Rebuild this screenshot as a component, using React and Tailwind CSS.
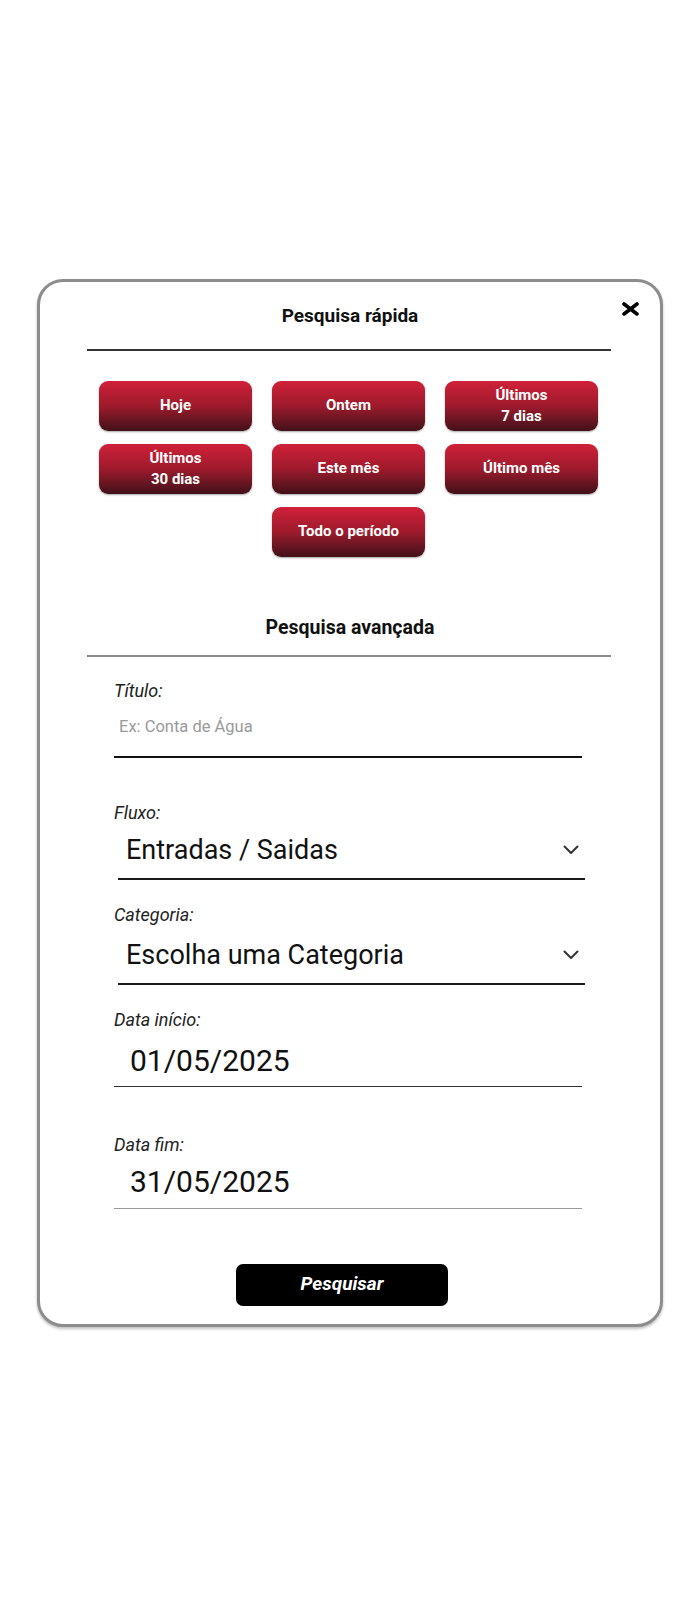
import React from "react";

const F = { fontFamily: "Roboto, 'Liberation Sans', sans-serif" };

function QuickButton({ children }) {
  return (
    <button
      className="h-[50px] w-[153px] rounded-[9px] bg-linear-to-b from-[#d02139] via-[#9e1a2c] to-[#43101a] text-white font-bold text-[15px] leading-[21px] shadow-[0_1px_2px_rgba(0,0,0,0.35)] flex flex-col items-center justify-center"
      style={F}
    >
      {children}
    </button>
  );
}

function Chevron() {
  return (
    <svg width="16" height="10" viewBox="0 0 16 10" fill="none">
      <path d="M1.5 1.5 L8 8 L14.5 1.5" stroke="#333" strokeWidth="2" strokeLinecap="round" strokeLinejoin="round" />
    </svg>
  );
}

export default function App() {
  return (
    <div className="w-full h-[1600px] bg-white pt-[279px]" style={F}>
      <div className="ml-[37px] w-[626px] h-[1048px] rounded-[26px] border-[3px] border-[#8d8d8d] bg-white shadow-[0_2px_3px_rgba(0,0,0,0.25)] relative">
        <button className="absolute right-[20px] top-[20px] w-[20px] h-[14px] flex items-center justify-center">
          <svg width="19" height="14" viewBox="0 0 19 14">
            <path d="M3 2 L16 12 M16 2 L3 12" stroke="#000" strokeWidth="3.6" strokeLinecap="round" />
          </svg>
        </button>

        <div className="pt-[24px] text-center text-[19px] leading-[20px] font-bold text-[#111]">Pesquisa rápida</div>
        <div className="mt-[23px] ml-[47px] w-[524px] h-[1.5px] bg-[#333]" />

        <div className="mt-[30px] ml-[59px] grid grid-cols-[153px_153px_153px] gap-x-[20px] gap-y-[13px]">
          <QuickButton>Hoje</QuickButton>
          <QuickButton>Ontem</QuickButton>
          <QuickButton>
            <span>Últimos</span>
            <span>7 dias</span>
          </QuickButton>
          <QuickButton>
            <span>Últimos</span>
            <span>30 dias</span>
          </QuickButton>
          <QuickButton>Este mês</QuickButton>
          <QuickButton>Último mês</QuickButton>
          <div />
          <QuickButton>Todo o período</QuickButton>
        </div>

        <div className="mt-[61px] text-center text-[19.5px] leading-[20px] font-bold text-[#111]">Pesquisa avançada</div>
        <div className="mt-[17px] ml-[47px] w-[524px] h-[2px] bg-[#8a8a8a]" />

        <div className="ml-[74px] w-[468px] text-[#111]">
          <div className="mt-[24px] h-[20px] leading-[20px] italic text-[18px] text-[#222]">Título:</div>
          <input
            type="text"
            placeholder="Ex: Conta de Água"
            className="block w-full h-[57px] pb-[4px] pl-[5px] border-b-2 border-[#111] text-[16.5px] outline-none placeholder:text-[#9a9a9a]"
            style={F}
          />

          <div className="mt-[45px] h-[20px] leading-[20px] italic text-[18px] text-[#222]">Fluxo:</div>
          <div className="ml-[4px] w-[467px] h-[57px] border-b-2 border-[#1a1a1a] flex items-center justify-between pl-[8px] pr-[6px]">
            <span className="text-[27px] text-[#111]">Entradas / Saidas</span>
            <Chevron />
          </div>

          <div className="mt-[25px] h-[20px] leading-[20px] italic text-[18px] text-[#222]">Categoria:</div>
          <div className="ml-[4px] w-[467px] h-[60px] pt-[3px] border-b-2 border-[#1a1a1a] flex items-center justify-between pl-[8px] pr-[6px]">
            <span className="text-[27px] text-[#111]">Escolha uma Categoria</span>
            <Chevron />
          </div>

          <div className="mt-[25px] h-[20px] leading-[20px] italic text-[18px] text-[#222]">Data início:</div>
          <div className="h-[57px] pt-[6px] border-b-[1.5px] border-[#333] flex items-center pl-[16px]">
            <span className="text-[30px] text-[#111]">01/05/2025</span>
          </div>

          <div className="mt-[48px] h-[20px] leading-[20px] italic text-[18px] text-[#222]">Data fim:</div>
          <div className="h-[54px] border-b-[1.5px] border-[#9a9a9a] flex items-center pl-[16px]">
            <span className="text-[30px] text-[#111]">31/05/2025</span>
          </div>
        </div>

        <div className="mt-[55px] flex justify-center">
          <button className="ml-[-16px] w-[212px] h-[42px] rounded-[7px] bg-black text-white italic font-bold text-[19px]" style={F}>
            Pesquisar
          </button>
        </div>
      </div>
    </div>
  );
}
